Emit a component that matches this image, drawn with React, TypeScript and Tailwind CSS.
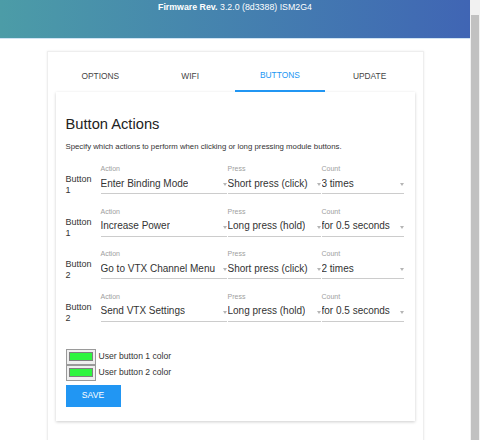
import React from 'react';

const rows = [
    { button: '1', action: 'Enter Binding Mode', press: 'Short press (click)', count: '3 times' },
    { button: '1', action: 'Increase Power', press: 'Long press (hold)', count: 'for 0.5 seconds' },
    { button: '2', action: 'Go to VTX Channel Menu', press: 'Short press (click)', count: '2 times' },
    { button: '2', action: 'Send VTX Settings', press: 'Long press (hold)', count: 'for 0.5 seconds' },
];

function Select({ label, value, width }: { label: string; value: string; width: string }) {
    return (
        <div className={`${width} flex flex-col`}>
            <span className="text-[7px] leading-[8px] text-[#9e9e9e]">{label}</span>
            <div className="relative flex items-center h-[21px] border-b border-[#cccccc] pr-[9px]">
                <span className="text-[10px] text-[#333] whitespace-nowrap overflow-hidden">{value}</span>
                <span className="absolute right-0 top-[10px] w-0 h-0 border-l-[2.5px] border-r-[2.5px] border-t-[3px] border-l-transparent border-r-transparent border-t-[#b5b5b5]"></span>
            </div>
        </div>
    );
}

function ColorSwatch({ label }: { label: string }) {
    return (
        <div className="flex items-center gap-[3px]">
            <div className="w-[30px] h-[16px] border border-[#9a9a9a] bg-[#efefef] px-[2px] py-[2.5px]">
                <div className="w-full h-full bg-[#2ef53f] border border-[#808080]"></div>
            </div>
            <span className="text-[8.6px] text-[#333]">{label}</span>
        </div>
    );
}

export default function App() {
    const tabs = ['OPTIONS', 'WIFI', 'BUTTONS', 'UPDATE'];
    return (
        <div className="flex w-[480px] h-[440px] overflow-hidden bg-white" style={{ fontFamily: '"Liberation Sans", Arial, sans-serif' }}>
            <div className="flex-1 flex flex-col">
                <header className="h-[39px] shrink-0 bg-gradient-to-r from-[#4c9ca7] to-[#4065b4] border-b border-[#cfe3f3] flex justify-center pt-[1px]">
                    <span className="text-[8.8px] text-white leading-[12px]">
                        <b>Firmware Rev.</b> 3.2.0 (8d3388) ISM2G4
                    </span>
                </header>
                <div className="flex justify-center pt-[12px]">
                    <div className="w-[377px] bg-white border border-[#eeeeee] shadow-[0_0_2px_rgba(0,0,0,0.08)] px-[8px] pt-[8px] pb-[40px]">
                        <div className="grid grid-cols-4 h-[32px]">
                            {tabs.map((t) => (
                                <div key={t} className={`flex items-center justify-center text-[8.4px] ${t === 'BUTTONS' ? 'text-[#2196f3] border-b-2 border-[#2196f3]' : 'text-[#444]'}`}>
                                    {t}
                                </div>
                            ))}
                        </div>
                        <div className="bg-white shadow-[0_1px_3px_rgba(0,0,0,0.2)] px-[10px] pt-[22px] pb-[14px]">
                            <h2 className="text-[14.7px] text-[#222] leading-[20px]">Button Actions</h2>
                            <p className="text-[7.8px] leading-[11px] text-[#333] mt-[6.5px]">Specify which actions to perform when clicking or long pressing module buttons.</p>
                            <div className="flex flex-col gap-[13.5px] mt-[13.5px]">
                                {rows.map((r, i) => (
                                    <div key={i} className="flex items-end">
                                        <div className="w-[35px] text-[9px] leading-[11px] text-[#333] mb-[-2px]">
                                            Button<br />{r.button}
                                        </div>
                                        <div className="flex gap-[1px]">
                                            <Select label="Action" value={r.action} width="w-[126px]" />
                                            <Select label="Press" value={r.press} width="w-[93px]" />
                                            <Select label="Count" value={r.count} width="w-[82px]" />
                                        </div>
                                    </div>
                                ))}
                            </div>
                            <div className="flex flex-col mt-[27px]">
                                <ColorSwatch label="User button 1 color" />
                                <ColorSwatch label="User button 2 color" />
                            </div>
                            <button className="mt-[4px] w-[55px] h-[22px] bg-[#2196f3] text-white text-[8.6px] font-medium">SAVE</button>
                        </div>
                    </div>
                </div>
            </div>
            <div className="w-[10px] bg-[#f1f1f1] pt-[15px] flex justify-center">
                <div className="w-[8px] h-full bg-[#c1c1c1]"></div>
            </div>
        </div>
    );
}
